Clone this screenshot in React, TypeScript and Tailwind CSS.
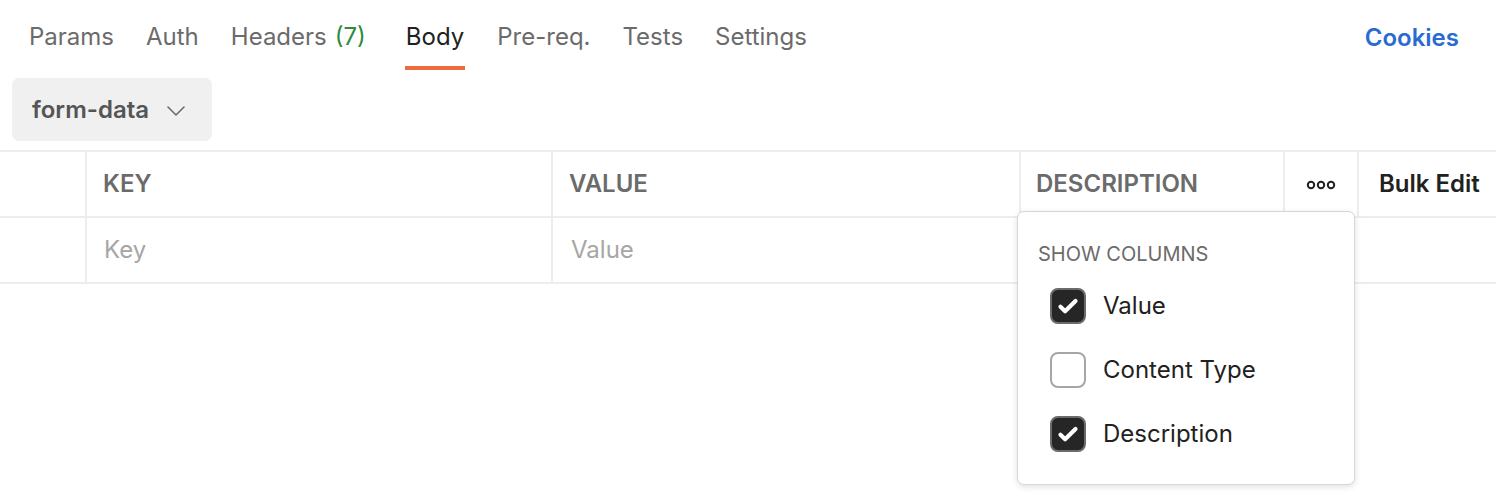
const tabs = [
  { label: 'Params' },
  { label: 'Auth' },
  { label: 'Headers', count: '(7)' },
  { label: 'Body', active: true },
  { label: 'Pre-req.' },
  { label: 'Tests' },
  { label: 'Settings' },
];

const columns = [
  { label: 'Value', checked: true },
  { label: 'Content Type', checked: false },
  { label: 'Description', checked: true },
];

function Checkbox({ checked }: { checked: boolean }) {
  return (
    <div
      className={`w-[36px] h-[36px] rounded-[8px] border-2 flex items-center justify-center ${
        checked ? 'bg-[#262626] border-[#6b6b6b]' : 'bg-white border-[#a6a6a6]'
      }`}
    >
      {checked && (
        <svg width="24" height="24" viewBox="0 0 24 24" fill="none">
          <path d="M4.5 12.8l4.6 4.4L19.5 7" stroke="white" strokeWidth="4.2" strokeLinecap="round" strokeLinejoin="round" />
        </svg>
      )}
    </div>
  );
}

function Dots() {
  return (
    <svg width="30" height="10" viewBox="0 0 30 10" fill="none">
      <circle cx="5" cy="5" r="3.2" stroke="#212121" strokeWidth="2" />
      <circle cx="15" cy="5" r="3.2" stroke="#212121" strokeWidth="2" />
      <circle cx="25" cy="5" r="3.2" stroke="#212121" strokeWidth="2" />
    </svg>
  );
}

export default function App() {
  return (
    <div className="w-[1496px] h-[502px] bg-white overflow-hidden font-['Inter',sans-serif] text-[24px]">
      {/* tab bar */}
      <div className="flex items-stretch h-[70px] pl-[29px] pr-[37px]">
        <div className="flex items-stretch">
          {tabs.map((t) => (
            <div
              key={t.label}
              className={`flex items-center border-b-4 mr-[32px] ${
                t.active ? 'border-[#eb6d3f] text-[#212121] px-[1px]' : 'border-transparent text-[#6b6b6b]'
              } ${t.label === 'Body' ? 'ml-[7px]' : ''}`}
            >
              <span className="pt-[8px]">
                {t.label}
                {t.count && <span className="text-[#2f8a3e] ml-[8px]">{t.count}</span>}
              </span>
            </div>
          ))}
        </div>
        <div className="ml-auto flex items-center pt-[6px]">
          <span className="text-[#2a6bd2] font-semibold">Cookies</span>
        </div>
      </div>

      {/* body type select */}
      <div className="pl-[12px] pt-[8px] pb-[9px]">
        <div className="w-[200px] h-[63px] rounded-[7px] bg-[#f0f0f0] flex items-center pl-[20px] pr-[27px]">
          <span className="font-semibold text-[#555555]">form-data</span>
          <svg className="ml-auto mt-[2px]" width="18" height="10" viewBox="0 0 18 10" fill="none">
            <path d="M1 1l8 8 8-8" stroke="#6b6b6b" strokeWidth="1.6" strokeLinecap="round" strokeLinejoin="round" />
          </svg>
        </div>
      </div>

      {/* table */}
      <div className="relative">
        <div className="grid grid-cols-[85px_466px_468px_264px_74px_139px] h-[68px] border-y-2 border-[#ededed]">
          <div />
          <div className="border-l-2 border-[#ededed] flex items-center pl-[16px] font-semibold text-[#6b6b6b]">KEY</div>
          <div className="border-l-2 border-[#ededed] flex items-center pl-[16px] font-semibold text-[#6b6b6b]">VALUE</div>
          <div className="border-l-2 border-[#ededed] flex items-center pl-[15px] font-semibold text-[#6b6b6b]">DESCRIPTION</div>
          <div className="border-l-2 border-[#ededed] flex items-center justify-center pt-[2px]">
            <Dots />
          </div>
          <div className="border-l-2 border-[#ededed] flex items-center pl-[20px] font-semibold text-[#212121]">Bulk Edit</div>
        </div>
        <div className="grid grid-cols-[85px_466px_468px_1fr] h-[66px] border-b-2 border-[#ededed]">
          <div />
          <div className="border-l-2 border-[#ededed] flex items-center pl-[17px] pb-[1px] text-[#a6a6a6]">Key</div>
          <div className="border-l-2 border-[#ededed] flex items-center pl-[18px] pb-[1px] text-[#a6a6a6]">Value</div>
          <div className="border-l-2 border-[#ededed]" />
        </div>

        {/* show columns menu */}
        <div className="absolute left-[1017px] top-[61px] w-[338px] h-[274px] bg-white border border-[#d6d6d6] rounded-[7px] shadow-[0_2px_6px_rgba(0,0,0,0.12)] px-[20px] pt-[30px]">
          <div className="text-[20px] leading-[24px] text-[#6b6b6b]">SHOW COLUMNS</div>
          <div className="mt-[8px]">
            {columns.map((c) => (
              <div key={c.label} className="h-[64px] flex items-center pl-[12px] gap-[17px]">
                <Checkbox checked={c.checked} />
                <span className="text-[#212121]">{c.label}</span>
              </div>
            ))}
          </div>
        </div>
      </div>
    </div>
  );
}
